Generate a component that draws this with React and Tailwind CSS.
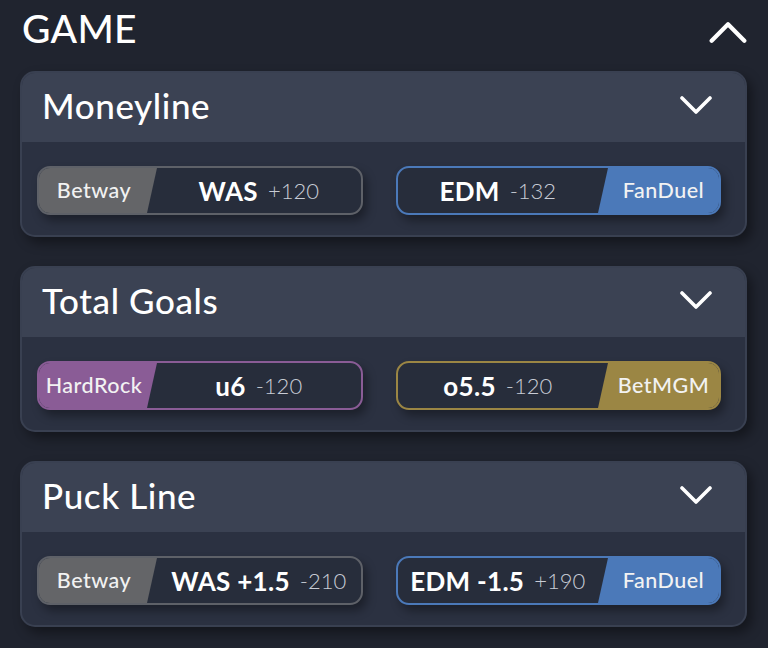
import React from 'react';

const books = {
  Betway: { bg: 'bg-[#646568]', border: 'border-[#5e6168]' },
  FanDuel: { bg: 'bg-[#4b79b9]', border: 'border-[#4b79b9]' },
  HardRock: { bg: 'bg-[#8a5c96]', border: 'border-[#8a5c96]' },
  BetMGM: { bg: 'bg-[#9b8644]', border: 'border-[#9b8644]' },
};

const markets = [
  {
    title: 'Moneyline',
    left: { book: 'Betway', pick: 'WAS', odds: '+120' },
    right: { book: 'FanDuel', pick: 'EDM', odds: '-132' },
  },
  {
    title: 'Total Goals',
    left: { book: 'HardRock', pick: 'u6', odds: '-120' },
    right: { book: 'BetMGM', pick: 'o5.5', odds: '-120' },
  },
  {
    title: 'Puck Line',
    left: { book: 'Betway', pick: 'WAS +1.5', odds: '-210' },
    right: { book: 'FanDuel', pick: 'EDM -1.5', odds: '+190' },
  },
];

const Chevron = ({ up, className }) => (
  <svg viewBox="0 0 32 18" className={className} fill="none" stroke="currentColor" strokeWidth="3.6" strokeLinecap="round" strokeLinejoin="round">
    {up ? <path d="M2 16 16 2l14 14" /> : <path d="M2 2l14 14L30 2" />}
  </svg>
);

const Pick = ({ pick, odds }) => (
  <div className="flex-1 flex items-center justify-center gap-[10px]">
    <span className="text-[26px] font-bold text-white leading-none tracking-[0.3px]">{pick}</span>
    <span className="text-[22px] font-light text-[#c8ccd5] leading-none">{odds}</span>
  </div>
);

const Pill = ({ book, pick, odds, side }) => {
  const b = books[book];
  const label = (
    <div
      className={
        side === 'left'
          ? `${b.bg} w-[118px] h-full flex items-center justify-center pr-[8px] [clip-path:polygon(0_0,100%_0,calc(100%-10px)_100%,0_100%)]`
          : `${b.bg} w-[121px] h-full flex items-center justify-center pl-[10px] [clip-path:polygon(10px_0,100%_0,100%_100%,0_100%)]`
      }
    >
      <span className="text-[21.5px] font-medium text-[#f2f2f2] leading-none tracking-[0.5px]">{book}</span>
    </div>
  );
  return (
    <div className={`flex h-[49px] rounded-[13px] border-2 ${b.border} bg-[#272d3b] overflow-hidden shadow-[4px_6px_10px_rgba(0,0,0,0.35)]`}>
      {side === 'left' && label}
      <Pick pick={pick} odds={odds} />
      {side === 'right' && label}
    </div>
  );
};

const MarketCard = ({ title, left, right }) => (
  <div className="rounded-[15px] border-2 border-[#394051] bg-[#2b3141] overflow-hidden shadow-[5px_6px_12px_rgba(0,0,0,0.4)]">
    <div className="h-[69px] bg-[#3b4253] flex items-center justify-between pl-[20px] pr-[33px] pb-[5px]">
      <span className="text-[35px] font-medium text-white leading-none tracking-[0.6px]">{title}</span>
      <Chevron className="w-[32px] h-[18px] text-white" />
    </div>
    <div className="grid grid-cols-2 gap-[33px] pl-[15px] pr-[24px] pt-[24px] pb-[20px]">
      <Pill side="left" {...left} />
      <Pill side="right" {...right} />
    </div>
  </div>
);

export default function App() {
  return (
    <div className="w-[768px] h-[648px] bg-[#20242f] overflow-hidden font-['Lato','Noto_Sans',sans-serif]">
      <div className="h-[58px] flex items-center justify-between pl-[22px] pr-[21px]">
        <span className="text-[39px] font-medium text-white leading-none tracking-[0.3px] -mt-[2px]">GAME</span>
        <Chevron up className="w-[38px] h-[21px] text-white mt-[6px]" />
      </div>
      <div className="flex flex-col gap-[29px] pl-[20px] pr-[21px] mt-[13px]">
        {markets.map((m) => (
          <MarketCard key={m.title} {...m} />
        ))}
      </div>
    </div>
  );
}
